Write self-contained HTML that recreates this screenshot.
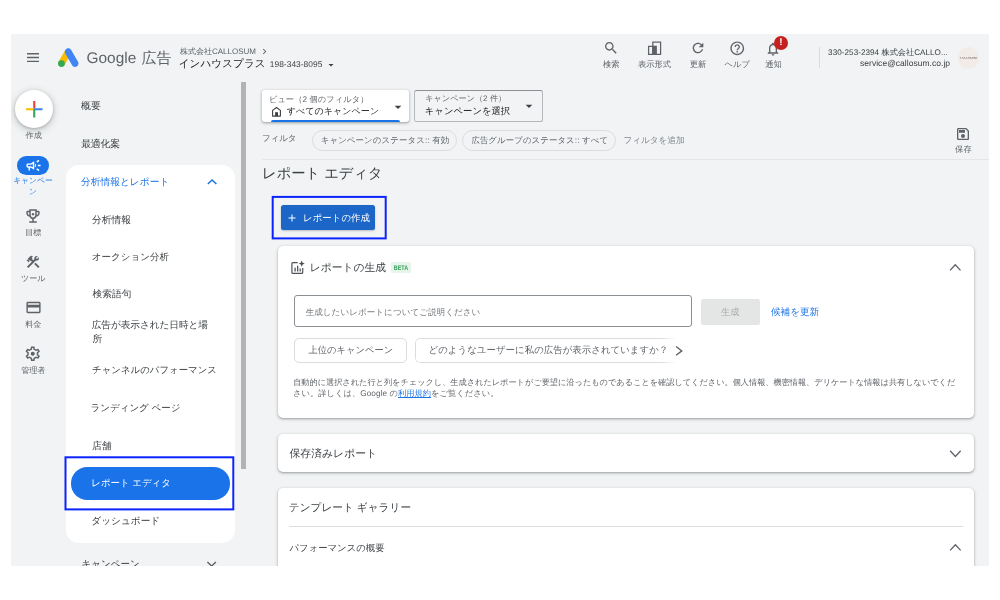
<!DOCTYPE html>
<html lang="ja">
<head>
<meta charset="utf-8">
<title>レポート エディタ - Google 広告</title>
<style>
html,body{margin:0;padding:0;background:#fff;}
body{text-rendering:geometricPrecision;width:1000px;height:600px;position:relative;overflow:hidden;font-family:"Liberation Sans",sans-serif;color:#3c4043;}
#app{opacity:.999;position:absolute;left:0;top:0;width:1000px;height:600px;clip-path:inset(34px 11px 34px 11px);background:#f1f3f4;}
.a{position:absolute;}
.t{position:absolute;white-space:nowrap;line-height:1;margin:0;padding:0;}
svg{position:absolute;display:block;overflow:visible;}
.g{color:#5f6368;}
.d{color:#3c4043;}
.b{color:#1a73e8;}
.s8{font-size:8px;}
.s94{font-size:9.5px;}
.s11{font-size:10.9px;}
.card{position:absolute;background:#fff;border-radius:5px;box-shadow:0 1px 2px rgba(60,64,67,.35),0 1px 3px 1px rgba(60,64,67,.12);}
.chip{position:absolute;box-sizing:border-box;border:1px solid #dadce0;border-radius:11px;}
</style>
</head>
<body>
<div id="app">

<!-- ===== header ===== -->
<header>
<svg style="left:27px;top:52.900px" width="12" height="10" viewBox="0 0 12 10"><path fill="#5f6368" d="M0 0h12v1.400H0zM0 3.850h12v1.400H0zM0 7.700h12v1.400H0z"/></svg>
<svg id="logo" style="left:58px;top:47.5px" width="20.5" height="19" viewBox="0 0 192 178"><path fill="#fbbc04" d="M4.3 129.6 68 19.300000000000001l55.4 32L59.7 161.6z"/><path fill="#4285f4" d="M187.7 129.600 123.700 19.200c-8.800-15.300-28.400-20.500-43.700-11.700S59.500 35.900 68.300 51.200l64 110.400c8.800 15.300 28.400 20.500 43.700 11.700 15.300-8.800 20.500-28.400 11.700-43.700z"/><circle fill="#34a853" cx="32" cy="145.600" r="32"/></svg>
<span class="t g" style="left:86.500px;top:50.5px;font-size:15.43px">Google</span>
<span class="t g" style="left:141.500px;top:51.1px;font-size:15px">広告</span>
<span class="t g" style="left:180px;top:48.0px;font-size:8px">株式会社CALLOSUM</span>
<svg style="left:258.500px;top:45.500px" width="11" height="11" viewBox="0 0 24 24"><path fill="#5f6368" d="M10 6L8.590 7.410 13.170 12l-4.580 4.590L10 18l6-6z"/></svg>
<span class="t" style="left:178.7px;top:58.8px;font-size:10.57px;color:#202124;letter-spacing:0.06px">インハウスプラス</span>
<span class="t d" style="left:269.8px;top:60.1px;font-size:8.36px;letter-spacing:0.05px">198-343-8095</span>
<svg style="left:324.500px;top:58.500px" width="12" height="12" viewBox="0 0 24 24"><path fill="#3c4043" d="M7 10l5 5 5-5z"/></svg>
</header>
<!-- header right tools -->
<nav id="tools">
<svg style="left:603px;top:40px" width="16" height="16" viewBox="0 0 24 24"><path fill="#5f6368" d="M15.5 14h-.79l-.28-.27C15.410 12.590 16 11.110 16 9.500 16 5.910 13.090 3 9.500 3S3 5.910 3 9.500 5.910 16 9.500 16c1.610 0 3.090-.59 4.230-1.570l.27.28v.79l5 4.990L20.490 19l-4.990-5zm-6 0C7.010 14 5 11.990 5 9.500S7.010 5 9.500 5 14 7.010 14 9.500 11.990 14 9.500 14z"/></svg>
<span class="t g" style="left:591.3px;width:40px;text-align:center;top:59.700px;font-size:8.300px">検索</span>
<svg style="left:640px;top:36px" width="30" height="22" viewBox="640 36 30 22"><path fill="none" stroke="#5f6368" stroke-width="1.250" d="M648.600 46.300h4.200v8h-4.200zM652.800 42.100h7.800v12.200h-7.800z"/><path fill="#5f6368" d="M652.200 45.700h4.700v9.200h-4.700z"/></svg>
<span class="t g" style="left:634.5px;width:40px;text-align:center;top:59.700px;font-size:8.300px">表示形式</span>
<svg style="left:690px;top:40px" width="16" height="16" viewBox="0 0 24 24"><path fill="#5f6368" d="M17.650 6.350C16.200 4.900 14.210 4 12 4c-4.420 0-7.990 3.580-7.990 8s3.570 8 7.990 8c3.730 0 6.840-2.550 7.730-6h-2.080c-.82 2.330-3.040 4-5.650 4-3.310 0-6-2.690-6-6s2.690-6 6-6c1.660 0 3.140.69 4.220 1.780L13 11h7V4l-2.350 2.350z"/></svg>
<span class="t g" style="left:678.0px;width:40px;text-align:center;top:59.700px;font-size:8.300px">更新</span>
<svg style="left:729px;top:40px" width="16.500" height="16.500" viewBox="0 0 24 24"><path fill="#5f6368" d="M11 18h2v-2h-2v2zm1-16C6.480 2 2 6.480 2 12s4.480 10 10 10 10-4.480 10-10S17.520 2 12 2zm0 18c-4.410 0-8-3.590-8-8s3.590-8 8-8 8 3.590 8 8-3.590 8-8 8zm0-14c-2.210 0-4 1.790-4 4h2c0-1.100.9-2 2-2s2 .9 2 2c0 2-3 1.750-3 5h2c0-2.250 3-2.500 3-5 0-2.210-1.790-4-4-4z"/></svg>
<span class="t g" style="left:717.3px;width:40px;text-align:center;top:59.700px;font-size:8.300px">ヘルプ</span>
<svg style="left:765px;top:41px" width="16" height="16" viewBox="0 0 24 24"><path fill="#5f6368" d="M12 22c1.100 0 2-.9 2-2h-4c0 1.100.9 2 2 2zm6-6v-5c0-3.070-1.630-5.640-4.500-6.320V4c0-.83-.67-1.500-1.500-1.500s-1.500.67-1.500 1.500v.68C7.640 5.360 6 7.920 6 11v5l-2 2v1h16v-1l-2-2zm-2 1H8v-6c0-2.480 1.510-4.500 4-4.500s4 2.020 4 4.500v6z"/></svg>
<div class="a" style="left:774px;top:35.500px;width:14px;height:14px;border-radius:7px;background:#c5221f"></div>
<span class="t" style="left:774px;top:37.500px;width:14px;text-align:center;font-size:10px;font-weight:bold;color:#fff">!</span>
<span class="t g" style="left:753.5px;width:40px;text-align:center;top:59.700px;font-size:8.300px">通知</span>
<div class="a" style="left:819px;top:47px;width:1px;height:21px;background:#dadce0"></div>
<span class="t d" style="left:828.1px;top:48.8px;font-size:8.15px;letter-spacing:0.04px">330-253-2394 株式会社CALLO...</span>
<span class="t d" style="left:860px;top:58.7px;font-size:8.50px;letter-spacing:0.03px">service@callosum.co.jp</span>
<div class="a" style="left:957.500px;top:47px;width:21.500px;height:21.500px;border-radius:11px;background:#f2ece9"></div>
<span class="t" style="left:957.500px;top:56.500px;width:21.500px;text-align:center;font-size:2.900px;letter-spacing:.15px;color:#4a3f3b;font-family:'Liberation Serif',serif">CALLOSUM</span>
</nav>


<!-- ===== left rail ===== -->
<aside id="rail">
<div class="a" style="left:15px;top:90px;width:37.500px;height:37.500px;border-radius:50%;background:#fff;box-shadow:0 1px 3px rgba(60,64,67,.3),0 2px 6px 2px rgba(60,64,67,.15)"></div>
<svg style="left:25.500px;top:101px" width="16.500" height="16.500" viewBox="0 0 16.500 16.500"><path fill="#ea4335" d="M7.200 0h2.100v8.250H7.200z"/><path fill="#fbbc04" d="M0 7.200h8.250v2.100H0z"/><path fill="#4285f4" d="M8.250 7.200h8.250v2.100H8.250z"/><path fill="#34a853" d="M7.200 8.250h2.100v8.250H7.200z"/><path fill="#4285f4" d="M8.250 7.200h1.050v1.050H8.250z"/></svg>
<span class="t g" style="left:13.700px;width:40px;text-align:center;top:132.200px;font-size:8.100px">作成</span>
<div class="a" style="left:17px;top:156px;width:32px;height:18.500px;border-radius:9.250px;background:#1a73e8"></div>
<svg style="left:24.800px;top:156.900px" width="17" height="17" viewBox="0 0 24 24"><path fill="#fff" d="M18 11v2h4v-2h-4zm-2 6.610c.96.710 2.210 1.650 3.200 2.390.4-.53.8-1.070 1.200-1.600-.99-.74-2.240-1.680-3.200-2.400-.4.540-.8 1.080-1.200 1.610zM20.400 5.600c-.4-.53-.8-1.070-1.200-1.600-.99.740-2.240 1.680-3.200 2.400.4.530.8 1.070 1.200 1.600.96-.72 2.210-1.650 3.200-2.400zM4 9c-1.100 0-2 .9-2 2v2c0 1.100.9 2 2 2h1v4h2v-4h1l5 3V6L8 9H4zm5.030 1.710L11 9.530v4.940l-1.970-1.180-.48-.29H4v-2h4.550l.48-.29zM15.500 12c0-1.330-.58-2.530-1.500-3.350v6.690c.92-.81 1.500-2.010 1.500-3.340z"/></svg>
<span class="t b" style="left:13px;width:40px;text-align:center;top:177.300px;font-size:7.800px">キャンペー</span>
<span class="t b" style="left:13px;width:40px;text-align:center;top:187.500px;font-size:7.800px">ン</span>
<svg style="left:24.250px;top:206.900px" width="18" height="18" viewBox="0 0 24 24"><path fill="#5f6368" d="M19 5h-2V3H7v2H5c-1.100 0-2 .9-2 2v1c0 2.550 1.920 4.630 4.390 4.940.63 1.500 1.980 2.630 3.610 2.960V19H7v2h10v-2h-4v-3.100c1.630-.33 2.980-1.460 3.610-2.960C19.080 12.630 21 10.550 21 8V7c0-1.100-.9-2-2-2zM5 8V7h2v3.820C5.840 10.400 5 9.300 5 8zm7 6c-1.650 0-3-1.350-3-3V5h6v6c0 1.650-1.350 3-3 3zm7-6c0 1.300-.84 2.400-2 2.820V7h2v1z"/><circle cx="12" cy="9.500" r="1.600" fill="#5f6368"/></svg>
<span class="t g" style="left:13.300px;width:40px;text-align:center;top:229.1px;font-size:8.100px">目標</span>
<svg style="left:25px;top:253.500px" width="16" height="16" viewBox="0 0 24 24"><path fill="#5f6368" d="M13.783 15.172l2.121-2.121 5.996 5.996-2.121 2.121zM17.500 10c1.930 0 3.500-1.570 3.500-3.500 0-.58-.16-1.120-.41-1.600l-2.700 2.700-1.490-1.490 2.700-2.700c-.48-.25-1.020-.41-1.600-.41C15.570 3 14 4.570 14 6.500c0 .41.080.8.210 1.160l-1.850 1.850-1.780-1.780.71-.71-1.410-1.410L12 3.490c-1.170-1.170-3.070-1.170-4.240 0L4.220 7.030l1.410 1.410H2.810l-.71.71 3.540 3.540.71-.71V9.150l1.410 1.410.71-.71 1.780 1.780-7.410 7.410 2.120 2.120L16.340 9.790c.36.130.75.210 1.160.21z"/></svg>
<span class="t g" style="left:13.300px;width:40px;text-align:center;top:274.9px;font-size:8.100px">ツール</span>
<svg style="left:24.500px;top:299.250px" width="17" height="17" viewBox="0 0 24 24"><path fill="#5f6368" d="M20 4H4c-1.110 0-1.990.89-1.990 2L2 18c0 1.110.89 2 2 2h16c1.110 0 2-.89 2-2V6c0-1.110-.89-2-2-2zm0 14H4v-6h16v6zm0-10H4V6h16v2z"/></svg>
<span class="t g" style="left:13.300px;width:40px;text-align:center;top:320.5px;font-size:8.100px">料金</span>
<svg style="left:24.250px;top:345px" width="17.500" height="17.500" viewBox="0 0 24 24"><path fill="#5f6368" d="M19.430 12.980c.04-.32.070-.64.070-.98 0-.34-.03-.66-.07-.98l2.110-1.650c.19-.15.240-.42.120-.64l-2-3.460c-.09-.16-.26-.25-.44-.25-.06 0-.12.010-.17.030l-2.490 1c-.52-.4-1.080-.73-1.690-.98l-.38-2.650C14.460 2.180 14.250 2 14 2h-4c-.25 0-.46.180-.49.420l-.38 2.650c-.61.250-1.170.59-1.690.98l-2.490-1c-.06-.02-.12-.03-.18-.03-.17 0-.34.090-.43.250l-2 3.460c-.13.220-.07.490.12.640l2.110 1.650c-.04.320-.07.650-.07.980 0 .33.030.66.070.98l-2.110 1.650c-.19.150-.24.420-.12.640l2 3.460c.09.160.26.250.44.250.06 0 .12-.01.170-.03l2.490-1c.52.400 1.080.73 1.690.98l.38 2.650c.03.240.24.420.49.420h4c.25 0 .46-.18.490-.42l.38-2.650c.61-.25 1.170-.59 1.690-.98l2.490 1c.06.020.12.030.18.030.17 0 .34-.09.430-.25l2-3.460c.12-.22.070-.49-.12-.64l-2.110-1.650zm-1.980-1.710c.04.310.05.520.05.730 0 .21-.02.430-.05.730l-.14 1.130.89.700 1.080.84-.7 1.210-1.270-.51-1.040-.42-.9.680c-.43.320-.84.560-1.250.73l-1.060.43-.16 1.130-.2 1.350h-1.400l-.19-1.350-.16-1.130-1.060-.43c-.43-.18-.83-.41-1.230-.71l-.91-.7-1.060.43-1.270.51-.7-1.210 1.080-.84.890-.7-.14-1.130c-.03-.31-.05-.54-.05-.74s.02-.43.050-.73l.14-1.130-.89-.7-1.080-.84.700-1.210 1.270.51 1.040.42.900-.68c.43-.32.840-.56 1.250-.73l1.060-.43.160-1.130.2-1.350h1.390l.19 1.350.16 1.130 1.060.43c.43.180.83.410 1.230.71l.91.700 1.060-.43 1.270-.51.700 1.210-1.070.85-.89.700.14 1.130z"/><circle cx="12" cy="12" r="2.800" fill="#5f6368"/></svg>
<span class="t g" style="left:13.300px;width:40px;text-align:center;top:367.2px;font-size:8.100px">管理者</span>
</aside>

<!-- ===== sidebar ===== -->
<nav id="side">
<span class="t d s94" style="left:81.1px;top:102.0px;font-size:9.87px">概要</span>
<span class="t d s94" style="left:81.2px;top:140.2px;font-size:9.94px;letter-spacing:-0.27px">最適化案</span>
<div class="a" style="left:65.500px;top:165px;width:169.500px;height:378px;border-radius:13px;background:#fff"></div>
<span class="t b s94" style="left:81.0px;top:177.7px;font-size:9.72px">分析情報とレポート</span>
<svg style="left:204px;top:173px" width="16" height="16" viewBox="204 173 16 16"><path fill="none" stroke="#1a73e8" stroke-width="1.5" d="M207.800 184L212.100 180L216.400 184"/></svg>
<span class="t d s94" style="left:92.0px;top:215.5px;font-size:9.75px">分析情報</span>
<span class="t d s94" style="left:91.7px;top:252.8px;font-size:9.53px">オークション分析</span>
<span class="t d s94" style="left:92.500px;top:290.0px;font-size:9.73px">検索語句</span>
<span class="t d s94" style="left:91.8px;top:320.6px;font-size:9.700px;letter-spacing:-0.11px">広告が表示された日時と場</span>
<span class="t d s94" style="left:92.500px;top:334.500px;font-size:9.700px">所</span>
<span class="t d s94" style="left:92.0px;top:364.5px;font-size:9.41px">チャンネルのパフォーマンス</span>
<span class="t d s94" style="left:90.5px;top:403.5px">ランディング ページ</span>
<span class="t d s94" style="left:91.9px;top:441.7px;font-size:9.94px">店舗</span>
<div class="a" style="left:70.800px;top:467px;width:158.800px;height:32.600px;border-radius:16.300px;background:#1a73e8"></div>
<span class="t s94" style="left:91.3px;top:477.8px;color:#fff;font-size:9.44px">レポート エディタ</span>
<svg style="left:62px;top:454px" width="176" height="60" viewBox="62 454 176 60"><rect x="65.500" y="457.300" width="167.800" height="52.100" fill="none" stroke="#0b24fb" stroke-width="2"/></svg>
<span class="t d s94" style="left:91.3px;top:516.7px;font-size:9.67px">ダッシュボード</span>
<span class="t d s94" style="left:81.500px;top:559.500px">キャンペーン</span>
<svg style="left:203px;top:556px" width="16" height="16" viewBox="203 556 16 16"><path fill="none" stroke="#5f6368" stroke-width="1.400" d="M207.400 562L211.650 566L215.900 562"/></svg>
<div class="a" style="left:240.800px;top:82px;width:5.200px;height:386.500px;background:#b3b3b3"></div>
</nav>

<!-- ===== main ===== -->
<main>
<div class="a" style="left:261.600px;top:90px;width:147.400px;height:32.400px;border-radius:3px;background:#fff;box-shadow:0 1px 2px rgba(60,64,67,.3),0 1px 3px 1px rgba(60,64,67,.15)"></div>
<div class="a" style="left:271px;top:119.600px;width:128.600px;height:2.800px;border-radius:3px 3px 0 0;background:#1a73e8"></div>
<span class="t g" style="left:268.9px;top:95.5px;font-size:8.20px;letter-spacing:0.11px">ビュー（2 個のフィルタ）</span>
<svg style="left:270px;top:104px" width="14" height="14" viewBox="270 104 14 14"><path fill="none" stroke="#3c4043" stroke-width="1.100" stroke-linejoin="round" d="M272.600 116.100V110.400L276.500 107.500L280.400 110.400V116.100Z"/><path fill="#3c4043" d="M275.100 112.200h2.900v3.900h-2.900z"/></svg>
<span class="t s94" style="left:286.8px;top:107.3px;color:#202124;font-size:9.05px">すべてのキャンペーン</span>
<svg style="left:389.700px;top:98.700px" width="16" height="16" viewBox="0 0 24 24"><path fill="#3c4043" d="M7 10l5 5 5-5z"/></svg>

<div class="a" style="left:414px;top:90px;width:129px;height:32.200px;box-sizing:border-box;border:1px solid #b4b8bc;border-top-color:#8d9196;border-radius:2.500px"></div>
<span class="t g" style="left:425.3px;top:95.1px;font-size:8.04px;letter-spacing:0.09px">キャンペーン（2 件）</span>
<span class="t s94" style="left:424.8px;top:107.1px;color:#202124;font-size:9.36px">キャンペーンを選択</span>
<svg style="left:520.700px;top:98.300px" width="16" height="16" viewBox="0 0 24 24"><path fill="#3c4043" d="M7 10l5 5 5-5z"/></svg>

<span class="t g" style="left:261.9px;top:134.1px;font-size:8.61px;letter-spacing:-0.16px">フィルタ</span>
<div class="chip" style="left:312.400px;top:130.400px;width:144.600px;height:20.600px"></div>
<span class="t g" style="left:320.7px;top:136.4px;font-size:8.45px;letter-spacing:0.09px">キャンペーンのステータス:: 有効</span>
<div class="chip" style="left:462px;top:130.400px;width:154px;height:20.600px"></div>
<span class="t g" style="left:471.400px;top:136.2px;font-size:8.42px;letter-spacing:0.08px">広告グループのステータス:: すべて</span>
<span class="t g" style="left:623.5px;top:135.9px;font-size:8.67px;color:#80868b;letter-spacing:-0.09px">フィルタを追加</span>
<svg style="left:955px;top:126px" width="16" height="16" viewBox="0 0 24 24"><path fill="#5f6368" d="M17 3H5c-1.110 0-2 .9-2 2v14c0 1.100.89 2 2 2h14c1.100 0 2-.9 2-2V7l-4-4zm2 16H5V5h11.170L19 7.830V19zm-7-7c-1.660 0-3 1.340-3 3s1.340 3 3 3 3-1.340 3-3-1.340-3-3-3zM6 6h9v4H6z"/></svg>
<span class="t g" style="left:955.1px;top:145.1px;font-size:8.31px">保存</span>
<div class="a" style="left:262px;top:158.500px;width:727px;height:1px;background:#e4e6e9"></div>

<h1 class="t" style="left:262.0px;top:167.3px;font-size:14.30px;font-weight:normal;color:#3c4043">レポート エディタ</h1>

<div class="a" style="left:280.600px;top:205px;width:94.500px;height:25px;border-radius:2.500px;background:#1c66c8;box-shadow:0 1px 2px rgba(60,64,67,.3)"></div>
<svg style="left:286.200px;top:211.700px" width="12" height="12" viewBox="0 0 24 24"><path fill="#fff" d="M19 13h-6v6h-2v-6H5v-2h6V5h2v6h6v2z"/></svg>
<span class="t s94" style="left:303.1px;top:212.9px;color:#fff;font-size:9.41px">レポートの作成</span>
<svg style="left:268px;top:192px" width="124" height="52" viewBox="268 192 124 52"><rect x="272.700" y="196.900" width="113" height="41.500" fill="none" stroke="#0b24fb" stroke-width="2"/></svg>

<!-- generate card -->
<section>
<div class="card" style="left:277.500px;top:246px;width:696.700px;height:172px"></div>
<svg id="genicon" style="left:289.600px;top:259.700px" width="15.300" height="15.300" viewBox="0 0 24 24"><path fill="none" stroke="#4d5156" stroke-width="1.850" d="M12 4H4.500A1.500 1.500 0 0 0 3 5.500v14A1.500 1.500 0 0 0 4.500 21h14a1.500 1.500 0 0 0 1.500-1.500V12.500"/><path fill="#4d5156" d="M7 12h2v6H7zM11 9h2v9h-2zM15 13.500h2V18h-2zM18.400 .8l1.500 3.350 3.350 1.500-3.350 1.500-1.500 3.350-1.500-3.350-3.350-1.500 3.350-1.500z"/></svg>
<h2 class="t" style="left:309.7px;top:262.8px;font-size:10.75px;font-weight:normal;color:#3c4043">レポートの生成</h2>
<div class="a" style="left:391px;top:262.400px;width:20.300px;height:10.500px;background:#e6f4ea;border-radius:1.500px"></div>
<span class="t" style="left:391.200px;top:265.800px;width:20px;text-align:center;font-size:6.600px;font-weight:bold;letter-spacing:0px;color:#34a05a;transform:scaleX(.82)">BETA</span>
<svg style="left:947px;top:259px" width="16" height="16" viewBox="947 259 16 16"><path fill="none" stroke="#5f6368" stroke-width="1.35" d="M950.00 270.40L955.25 264.80L960.50 270.40"/></svg>

<div class="a" style="left:294.200px;top:295px;width:397.800px;height:31.800px;box-sizing:border-box;border:1px solid #8b9095;border-radius:3px"></div>
<span class="t" style="left:305.700px;top:308.0px;font-size:8.59px;color:#72787d">生成したいレポートについてご説明ください</span>
<div class="a" style="left:700.500px;top:299px;width:59.500px;height:26px;border-radius:2.500px;background:#e4e5e5"></div>
<span class="t" style="left:700.500px;top:307.500px;width:59.500px;text-align:center;font-size:9.200px;color:#a6a9ac">生成</span>
<span class="t b s94" style="left:771px;top:308.4px;font-size:9.59px">候補を更新</span>

<div class="chip" style="left:294.200px;top:338.200px;width:112.600px;height:25.100px;border-radius:5px"></div>
<span class="t g s94" style="left:308.4px;top:345.9px;font-size:9.30px">上位のキャンペーン</span>
<div class="chip" style="left:414.800px;top:338.200px;width:262.700px;height:25.100px;border-radius:5px;border-right:0;border-top-right-radius:0;border-bottom-right-radius:0;-webkit-mask-image:linear-gradient(90deg,#000 0,#000 245px,transparent 262px);mask-image:linear-gradient(90deg,#000 0,#000 245px,transparent 262px)"></div>
<span class="t g s94" style="left:428.5px;top:345.1px;font-size:9.44px;letter-spacing:0.02px">どのようなユーザーに私の広告が表示されていますか？</span>
<svg style="left:670px;top:342px" width="18" height="18" viewBox="670 342 18 18"><path fill="none" stroke="#5f6368" stroke-width="1.350" d="M676.100 346.500L681.800 350.900L676.100 355.300"/></svg>

<p class="t g" style="left:293.2px;top:378.7px;font-size:8.18px;letter-spacing:-0.01px">自動的に選択された行と列をチェックし、生成されたレポートがご要望に沿ったものであることを確認してください。個人情報、機密情報、デリケートな情報は共有しないでくだ</p>
<p class="t g" style="left:293.1px;top:389.9px;font-size:8.22px;letter-spacing:0.06px">さい。詳しくは、Google の<span style="color:#1a73e8;text-decoration:underline">利用規約</span>をご覧ください。</p>
</section>

<!-- saved reports -->
<section>
<div class="card" style="left:277.500px;top:433.700px;width:696.700px;height:38.300px"></div>
<h2 class="t" style="left:289.500px;top:449.0px;font-size:10.83px;font-weight:normal;color:#3c4043">保存済みレポート</h2>
<svg style="left:947px;top:445px" width="16" height="16" viewBox="947 445 16 16"><path fill="none" stroke="#5f6368" stroke-width="1.35" d="M950.15 450.80L955.40 456.40L960.65 450.80"/></svg>
</section>

<!-- template gallery -->
<section>
<div class="card" style="left:277.500px;top:487.500px;width:696.700px;height:120px"></div>
<h2 class="t" style="left:288.8px;top:502.6px;font-size:10.65px;font-weight:normal;color:#3c4043">テンプレート ギャラリー</h2>
<div class="a" style="left:288.700px;top:526px;width:674.300px;height:1px;background:#dadce0"></div>
<span class="t d s94" style="left:289.500px;top:544.0px;font-size:9.35px">パフォーマンスの概要</span>
<svg style="left:947px;top:539px" width="16" height="16" viewBox="947 539 16 16"><path fill="none" stroke="#5f6368" stroke-width="1.35" d="M950.15 550.40L955.40 544.80L960.65 550.40"/></svg>
</section>
</main>

</div>
</body>
</html>
